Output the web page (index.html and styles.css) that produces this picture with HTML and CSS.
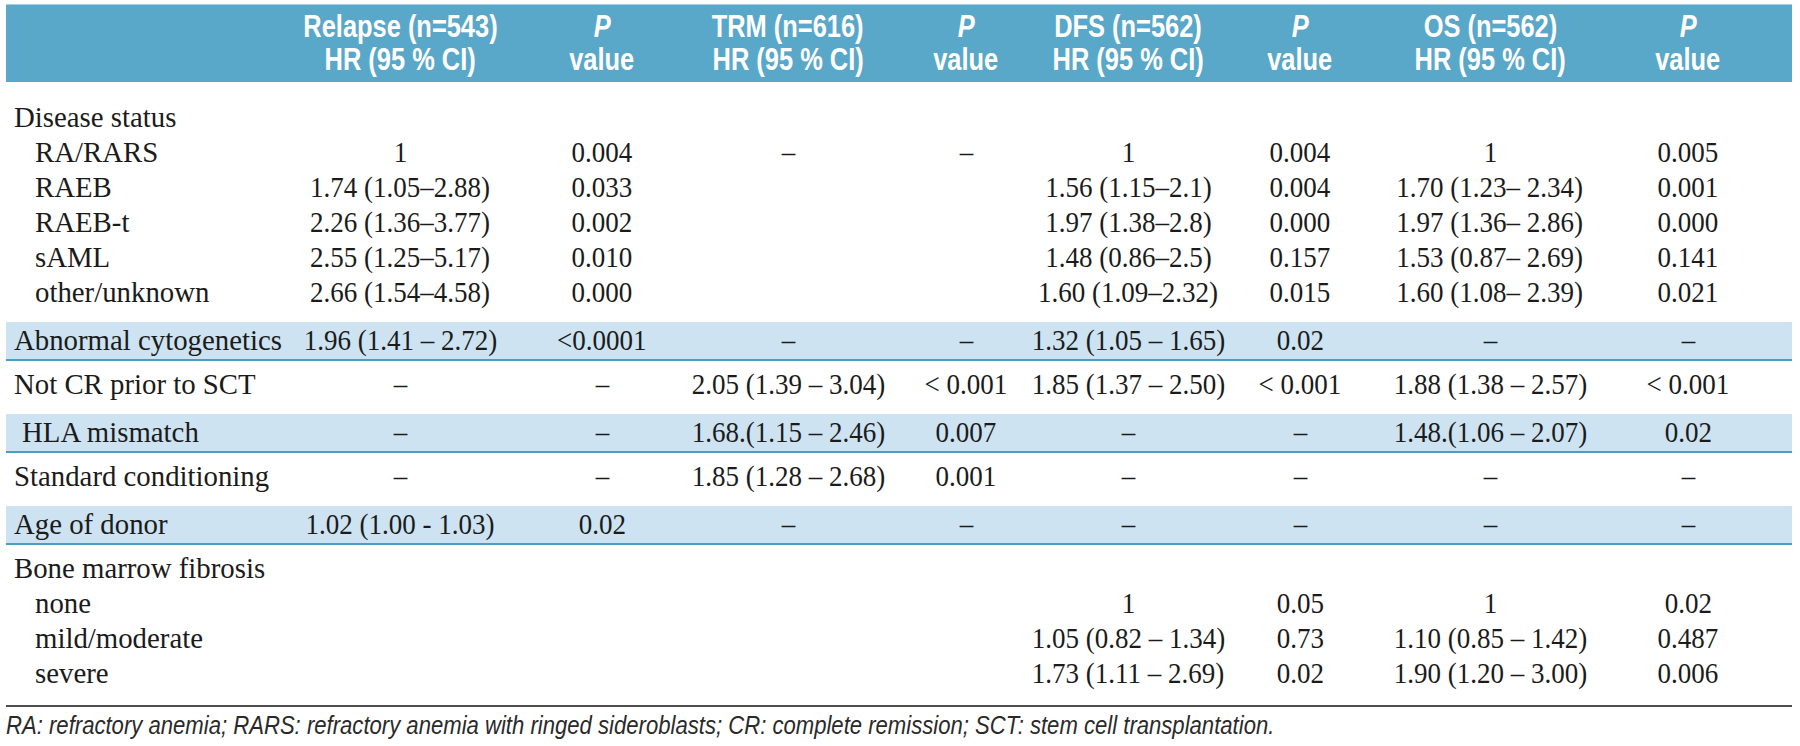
FILE: index.html
```html
<!DOCTYPE html>
<html lang="en">
<head>
<meta charset="utf-8">
<title>Multivariate analysis</title>
<link rel="stylesheet" href="styles.css">
</head>
<body>
<div class="page">
  <div class="table">
    <div class="row head">
      <div class="hc"></div>
      <div class="hc"><span>Relapse (n=543)</span><span>HR (95 % CI)</span></div>
      <div class="hc"><span><i>P</i></span><span>value</span></div>
      <div class="hc"><span>TRM (n=616)</span><span>HR (95 % CI)</span></div>
      <div class="hc"><span><i>P</i></span><span>value</span></div>
      <div class="hc"><span>DFS (n=562)</span><span>HR (95 % CI)</span></div>
      <div class="hc"><span><i>P</i></span><span>value</span></div>
      <div class="hc"><span>OS (n=562)</span><span>HR (95 % CI)</span></div>
      <div class="hc"><span><i>P</i></span><span>value</span></div>
    </div>

    <div class="sec sec-first">
      <div class="row line">
        <div class="lab"><span>Disease status</span></div>
        <div class="c"></div><div class="c"></div><div class="c"></div><div class="c"></div>
        <div class="c"></div><div class="c"></div><div class="c"></div><div class="c"></div>
      </div>
      <div class="row line">
        <div class="lab sub"><span>RA/RARS</span></div>
        <div class="c"><span>1</span></div>
        <div class="c"><span>0.004</span></div>
        <div class="c"><span>–</span></div>
        <div class="c"><span>–</span></div>
        <div class="c"><span>1</span></div>
        <div class="c"><span>0.004</span></div>
        <div class="c"><span>1</span></div>
        <div class="c"><span>0.005</span></div>
      </div>
      <div class="row line">
        <div class="lab sub"><span>RAEB</span></div>
        <div class="c"><span>1.74 (1.05–2.88)</span></div>
        <div class="c"><span>0.033</span></div>
        <div class="c"></div>
        <div class="c"></div>
        <div class="c"><span>1.56 (1.15–2.1)</span></div>
        <div class="c"><span>0.004</span></div>
        <div class="c"><span>1.70 (1.23– 2.34)</span></div>
        <div class="c"><span>0.001</span></div>
      </div>
      <div class="row line">
        <div class="lab sub"><span>RAEB-t</span></div>
        <div class="c"><span>2.26 (1.36–3.77)</span></div>
        <div class="c"><span>0.002</span></div>
        <div class="c"></div>
        <div class="c"></div>
        <div class="c"><span>1.97 (1.38–2.8)</span></div>
        <div class="c"><span>0.000</span></div>
        <div class="c"><span>1.97 (1.36– 2.86)</span></div>
        <div class="c"><span>0.000</span></div>
      </div>
      <div class="row line">
        <div class="lab sub"><span>sAML</span></div>
        <div class="c"><span>2.55 (1.25–5.17)</span></div>
        <div class="c"><span>0.010</span></div>
        <div class="c"></div>
        <div class="c"></div>
        <div class="c"><span>1.48 (0.86–2.5)</span></div>
        <div class="c"><span>0.157</span></div>
        <div class="c"><span>1.53 (0.87– 2.69)</span></div>
        <div class="c"><span>0.141</span></div>
      </div>
      <div class="row line">
        <div class="lab sub"><span>other/unknown</span></div>
        <div class="c"><span>2.66 (1.54–4.58)</span></div>
        <div class="c"><span>0.000</span></div>
        <div class="c"></div>
        <div class="c"></div>
        <div class="c"><span>1.60 (1.09–2.32)</span></div>
        <div class="c"><span>0.015</span></div>
        <div class="c"><span>1.60 (1.08– 2.39)</span></div>
        <div class="c"><span>0.021</span></div>
      </div>
    </div>

    <div class="row line band">
      <div class="lab"><span>Abnormal cytogenetics</span></div>
      <div class="c"><span>1.96 (1.41 – 2.72)</span></div>
      <div class="c"><span>&lt;0.0001</span></div>
      <div class="c"><span>–</span></div>
      <div class="c"><span>–</span></div>
      <div class="c"><span>1.32 (1.05 – 1.65)</span></div>
      <div class="c"><span>0.02</span></div>
      <div class="c"><span>–</span></div>
      <div class="c"><span>–</span></div>
    </div>

    <div class="row line plain">
      <div class="lab"><span>Not CR prior to SCT</span></div>
      <div class="c"><span>–</span></div>
      <div class="c"><span>–</span></div>
      <div class="c"><span>2.05 (1.39 – 3.04)</span></div>
      <div class="c"><span>&lt; 0.001</span></div>
      <div class="c"><span>1.85 (1.37 – 2.50)</span></div>
      <div class="c"><span>&lt; 0.001</span></div>
      <div class="c"><span>1.88 (1.38 – 2.57)</span></div>
      <div class="c"><span>&lt; 0.001</span></div>
    </div>

    <div class="row line band">
      <div class="lab lab-shift"><span>HLA mismatch</span></div>
      <div class="c"><span>–</span></div>
      <div class="c"><span>–</span></div>
      <div class="c"><span>1.68.(1.15 – 2.46)</span></div>
      <div class="c"><span>0.007</span></div>
      <div class="c"><span>–</span></div>
      <div class="c"><span>–</span></div>
      <div class="c"><span>1.48.(1.06 – 2.07)</span></div>
      <div class="c"><span>0.02</span></div>
    </div>

    <div class="row line plain">
      <div class="lab"><span>Standard conditioning</span></div>
      <div class="c"><span>–</span></div>
      <div class="c"><span>–</span></div>
      <div class="c"><span>1.85 (1.28 – 2.68)</span></div>
      <div class="c"><span>0.001</span></div>
      <div class="c"><span>–</span></div>
      <div class="c"><span>–</span></div>
      <div class="c"><span>–</span></div>
      <div class="c"><span>–</span></div>
    </div>

    <div class="row line band">
      <div class="lab"><span>Age of donor</span></div>
      <div class="c"><span>1.02 (1.00 - 1.03)</span></div>
      <div class="c"><span>0.02</span></div>
      <div class="c"><span>–</span></div>
      <div class="c"><span>–</span></div>
      <div class="c"><span>–</span></div>
      <div class="c"><span>–</span></div>
      <div class="c"><span>–</span></div>
      <div class="c"><span>–</span></div>
    </div>

    <div class="sec sec-last">
      <div class="row line">
        <div class="lab"><span>Bone marrow fibrosis</span></div>
        <div class="c"></div><div class="c"></div><div class="c"></div><div class="c"></div>
        <div class="c"></div><div class="c"></div><div class="c"></div><div class="c"></div>
      </div>
      <div class="row line">
        <div class="lab sub"><span>none</span></div>
        <div class="c"></div>
        <div class="c"></div>
        <div class="c"></div>
        <div class="c"></div>
        <div class="c"><span>1</span></div>
        <div class="c"><span>0.05</span></div>
        <div class="c"><span>1</span></div>
        <div class="c"><span>0.02</span></div>
      </div>
      <div class="row line">
        <div class="lab sub"><span>mild/moderate</span></div>
        <div class="c"></div>
        <div class="c"></div>
        <div class="c"></div>
        <div class="c"></div>
        <div class="c"><span>1.05 (0.82 – 1.34)</span></div>
        <div class="c"><span>0.73</span></div>
        <div class="c"><span>1.10 (0.85 – 1.42)</span></div>
        <div class="c"><span>0.487</span></div>
      </div>
      <div class="row line">
        <div class="lab sub"><span>severe</span></div>
        <div class="c"></div>
        <div class="c"></div>
        <div class="c"></div>
        <div class="c"></div>
        <div class="c"><span>1.73 (1.11 – 2.69)</span></div>
        <div class="c"><span>0.02</span></div>
        <div class="c"><span>1.90 (1.20 – 3.00)</span></div>
        <div class="c"><span>0.006</span></div>
      </div>
    </div>
  </div>
  <p class="foot"><span>RA: refractory anemia; RARS: refractory anemia with ringed sideroblasts; CR: complete remission; SCT: stem cell transplantation.</span></p>
</div>
</body>
</html>
```
FILE: styles.css
```css
html, body {
  margin: 0;
  padding: 0;
  background: #ffffff;
}

body {
  font-family: "Liberation Serif", "Times New Roman", serif;
  color: #1b1b1b;
}

.page {
  padding: 4px 0 0 6px;
}

.table {
  width: 1786px;
}

.row {
  display: grid;
  grid-template-columns: 286px 216px 188px 184px 172px 152px 192px 188px 208px;
}

/* header band */
.head {
  box-sizing: border-box;
  height: 78px;
  padding-top: 5px;
  background: #59a8ca;
  border-top: 1px solid #a3cfe2;
  color: #ffffff;
  font-family: "Liberation Sans", Arial, sans-serif;
  font-weight: bold;
  font-size: 31px;
  line-height: 33px;
}

.hc {
  display: flex;
  flex-direction: column;
  align-items: center;
}

.hc span {
  display: block;
  white-space: nowrap;
  transform: scaleX(0.82);
}

/* body rows */
.line > div {
  height: 35px;
  line-height: 35px;
}

.lab {
  font-size: 30px;
  padding-left: 8px;
  white-space: nowrap;
}

.lab span {
  display: inline-block;
  transform: scaleX(0.96);
  transform-origin: left center;
}

.sub {
  padding-left: 29px;
}

.lab-shift {
  padding-left: 16px;
}

.c {
  display: flex;
  justify-content: center;
  font-size: 30px;
  white-space: nowrap;
}

.c span {
  display: inline-block;
  transform: scaleX(0.9);
}

.sec-first {
  padding: 17px 0 13px;
}

.sec-last {
  padding: 5px 0 15px;
  border-bottom: 2px solid #4d4d4d;
}

.band {
  background: #cde3f1;
  padding-bottom: 2px;
  border-bottom: 2px solid #4b9ec3;
}

.plain {
  padding: 5px 0 13px;
}

/* footnote */
.foot {
  margin: 3px 0 0 0;
  font-family: "Liberation Sans", Arial, sans-serif;
  font-style: italic;
  font-size: 26px;
  line-height: 30px;
  color: #2a2a2a;
  white-space: nowrap;
}

.foot span {
  display: inline-block;
  transform: scaleX(0.85);
  transform-origin: left center;
}
```
